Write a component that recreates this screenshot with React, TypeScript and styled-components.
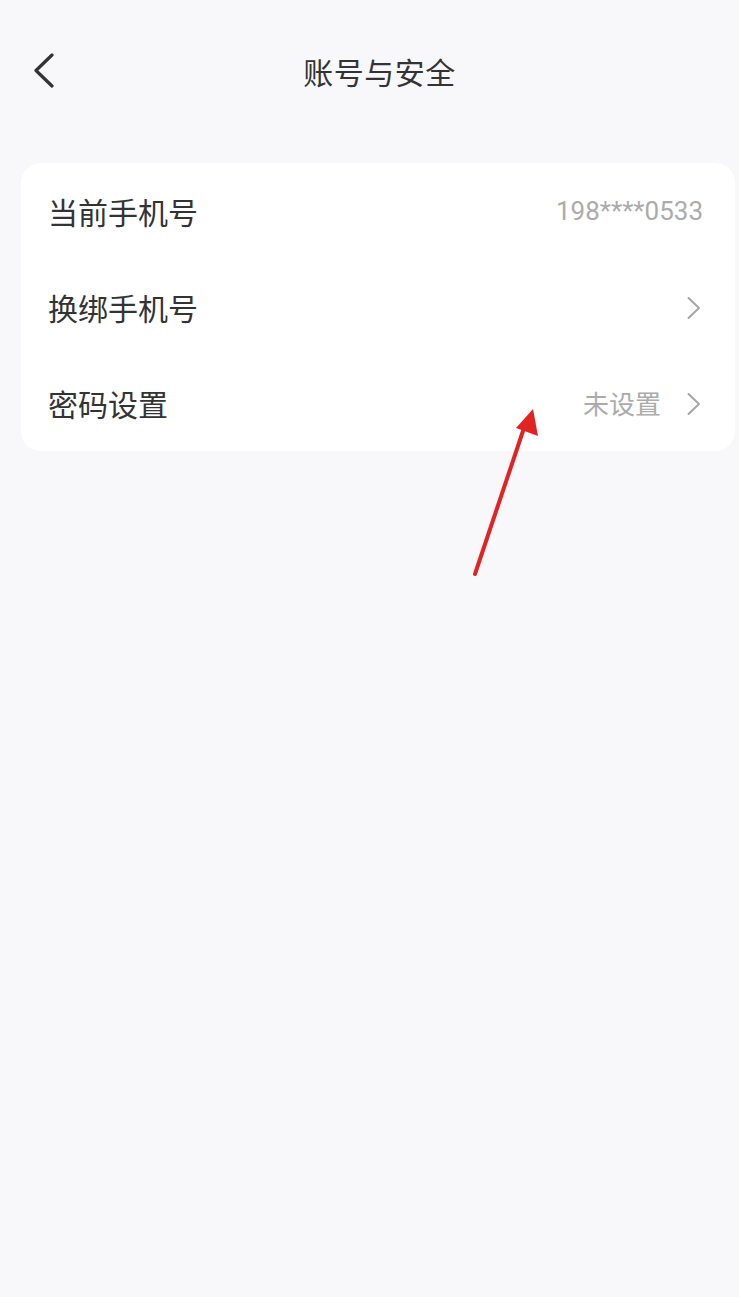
import React from "react";
import styled, { createGlobalStyle } from "styled-components";

const Global = createGlobalStyle`
  html, body { margin: 0; padding: 0; background: #f8f8fa; }
  body { font-family: "Noto Sans CJK SC", "Noto Sans", sans-serif; }
  #root { min-height: 1297px; }
`;

const Page = styled.div`
  position: relative;
  width: 739px;
  min-height: 1297px;
  background: #f8f8fa;
  overflow: hidden;
`;

const Header = styled.header`
  height: 144px;
  display: grid;
  grid-template-columns: 140px 1fr 120px;
  align-items: center;
`;

const BackButton = styled.button`
  justify-self: start;
  margin-left: 33px;
  padding: 0;
  border: 0;
  background: none;
  display: flex;
  align-items: center;
  margin-top: -2px;
`;

const Title = styled.h1`
  margin: 0;
  text-align: center;
  font-size: 30px;
  font-weight: 400;
  color: #333333;
  line-height: 1;
  letter-spacing: 0.5px;
  margin-top: -2px;
`;

const Card = styled.section`
  margin: 19px 0 0 21px;
  width: 714px;
  background: #ffffff;
  border-radius: 20px;
  display: flex;
  flex-direction: column;
`;

const Row = styled.div`
  height: 96px;
  display: flex;
  align-items: center;
  padding: 0 34px 0 27px;
`;

const Label = styled.span`
  flex: 1;
  font-size: 30px;
  color: #333333;
  line-height: 1;
`;

const Value = styled.span<{ $digits?: boolean }>`
  font-family: ${(p) => (p.$digits ? `Roboto, "Noto Sans CJK SC", sans-serif` : `"Noto Sans CJK SC", sans-serif`)};
  font-size: 26px;
  color: #ababab;
  line-height: 1;
  margin-right: ${(p) => (p.$digits ? "-2px" : "0")};
`;

const Chevron = styled.svg<{ $gap?: boolean }>`
  margin-left: ${(p) => (p.$gap ? "26px" : "0")};
  margin-top: 2px;
  flex: none;
`;

const Annotation = styled.svg`
  position: absolute;
  left: 0;
  top: 0;
  pointer-events: none;
`;

function RightChevron({ gap }: { gap?: boolean }) {
  return (
    <Chevron $gap={gap} width="14" height="24" viewBox="0 0 14 24">
      <path d="M1.5 2 L12 12 L1.5 22" fill="none" stroke="#a6a6a6" strokeWidth="2" strokeLinecap="round" strokeLinejoin="round" />
    </Chevron>
  );
}

export default function App() {
  return (
    <Page>
      <Global />
      <Header>
        <BackButton aria-label="返回">
          <svg width="22" height="36" viewBox="0 0 22 36">
            <path d="M19 2 L3 17.5 L19 33" fill="none" stroke="#333333" strokeWidth="3.2" strokeLinecap="round" strokeLinejoin="round" />
          </svg>
        </BackButton>
        <Title>账号与安全</Title>
        <div />
      </Header>
      <Card>
        <Row>
          <Label>当前手机号</Label>
          <Value $digits>198****0533</Value>
        </Row>
        <Row>
          <Label>换绑手机号</Label>
          <RightChevron />
        </Row>
        <Row>
          <Label>密码设置</Label>
          <Value>未设置</Value>
          <RightChevron gap />
        </Row>
      </Card>
      <Annotation width="739" height="1297" viewBox="0 0 739 1297">
        <line x1="475" y1="574" x2="524" y2="428" stroke="#e02424" strokeWidth="4" strokeLinecap="round" />
        <polygon points="533,409 516,428 538,436" fill="#e02424" />
      </Annotation>
    </Page>
  );
}
